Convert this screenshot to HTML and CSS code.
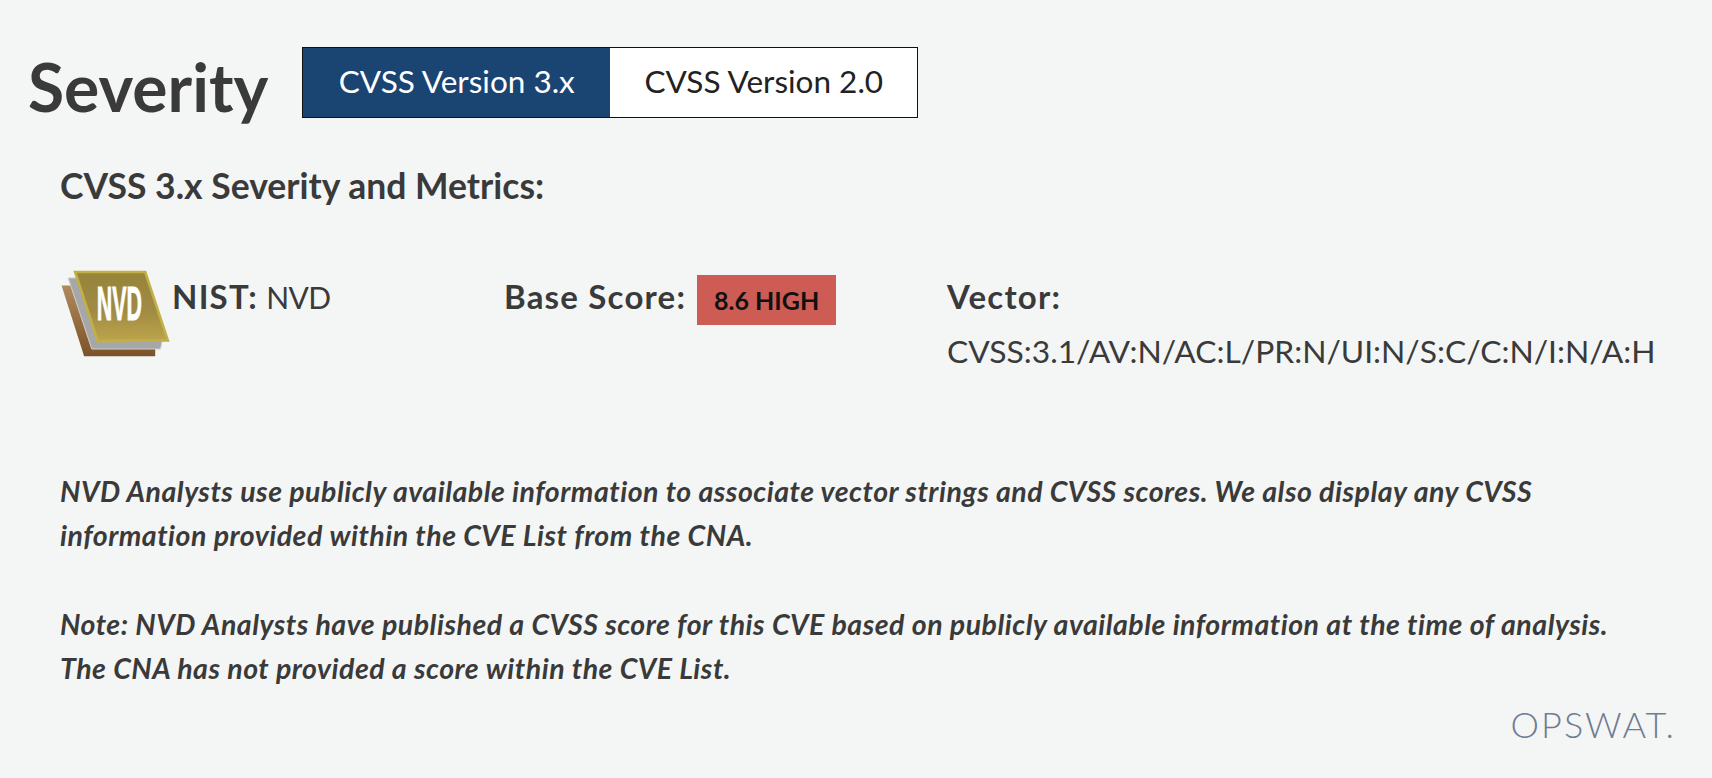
FILE: index.html
```html
<!DOCTYPE html>
<html lang="en">

<head>
    <meta charset="UTF-8">
    <meta name="viewport" content="width=device-width, initial-scale=1.0">
    <title>Severity</title>
    <link rel="stylesheet" href="styles.css">
</head>

<body>
    <div class="title-row">
        <h2 class="title">Severity</h2>
        <div class="tabs">
            <div class="tab tab-active">CVSS Version 3.x</div>
            <div class="tab">CVSS Version 2.0</div>
        </div>
    </div>

    <div class="content">
        <h3 class="metrics-title">CVSS 3.x Severity and Metrics:</h3>

        <div class="score-row">
            <div class="source">
                <svg class="nvd-icon" viewBox="60 58 330 265" width="110" height="88">
                    <defs>
                        <linearGradient id="goldFill" x1="0" y1="0" x2="0" y2="1">
                            <stop offset="0" stop-color="#96843a" />
                            <stop offset="0.55" stop-color="#a08a44" />
                            <stop offset="1" stop-color="#bca44a" />
                        </linearGradient>
                        <linearGradient id="brownFill" x1="0" y1="0" x2="0" y2="1">
                            <stop offset="0" stop-color="#b08a5c" />
                            <stop offset="1" stop-color="#7c5228" />
                        </linearGradient>
                    </defs>
                    <polygon points="64,105 280,105 346,290 346,318 132,318" fill="url(#brownFill)" />
                    <polygon points="84,82 300,82 366,276 362,296 155,296" fill="#a5a7a8" stroke="#d0d0cc" stroke-width="3" />
                    <polygon points="105,64 316,64 384,270 173,272" fill="url(#goldFill)" stroke="#c2b046" stroke-width="8" />
                    <text class="nvd-text" transform="translate(170 208) scale(3.22 7.1)">NVD</text>
                </svg>
                <p class="source-text"><strong class="label">NIST:</strong> <span class="source-name">NVD</span></p>
            </div>
            <div class="base-score">
                <strong class="label">Base Score:</strong>
                <span class="badge">8.6 HIGH</span>
            </div>
            <div class="vector">
                <strong class="label">Vector:</strong>
                <p class="vector-string">CVSS:3.1/AV:N/AC:L/PR:N/UI:N/S:C/C:N/I:N/A:H</p>
            </div>
        </div>

        <p class="note note-first">NVD Analysts use publicly available information to associate vector strings and CVSS scores. We also display any CVSS<br>information provided within the CVE List from the CNA.</p>
        <p class="note">Note: NVD Analysts have published a CVSS score for this CVE based on publicly available information at the time of analysis.<br>The CNA has not provided a score within the CVE List.</p>
    </div>

    <div class="brand-row">
        <span class="brand">OPSWAT.</span>
    </div>
</body>

</html>
```

FILE: styles.css
```css
html,
body {
    height: 100%;
}

body {
    margin: 0;
    overflow: hidden;
    box-sizing: border-box;
    padding: 47px 36px 0 28px;
    background-color: #f4f6f6;
    color: #3a3a3a;
    font-family: "Lato", "Noto Sans", sans-serif;
}

.title-row {
    display: flex;
    align-items: flex-start;
    gap: 34px;
}

.title {
    margin: 4px 0 0;
    font-size: 66px;
    line-height: 72px;
    font-weight: 700;
}

.tabs {
    display: flex;
    border: 1px solid #111;
}

.tab {
    width: 307px;
    height: 69px;
    line-height: 66px;
    text-align: center;
    background-color: #fff;
    color: #222;
    font-size: 31.5px;
}

.tab-active {
    background-color: #1a4472;
    color: #fff;
}

.content {
    padding-left: 32px;
}

.metrics-title {
    margin: 42px 0 0;
    font-size: 35.5px;
    line-height: 42px;
    font-weight: 700;
}

.score-row {
    display: flex;
    margin-top: 60px;
    font-size: 32px;
    line-height: 44px;
}

.label {
    font-size: 33px;
    letter-spacing: 1.2px;
}

.source {
    display: flex;
    width: 444px;
}

.nvd-icon {
    flex-shrink: 0;
    margin-top: 3px;
}

.nvd-text {
    fill: #fff;
    stroke: #fff;
    stroke-width: 0.4px;
    font-family: "Liberation Sans", sans-serif;
    font-size: 20px;
    font-weight: 700;
}

.source-text {
    margin: 7px 0 0 2px;
}

.source-name {
    font-size: 30px;
    letter-spacing: -0.6px;
}

.base-score {
    display: flex;
    align-items: flex-start;
    width: 443px;
    padding-top: 7px;
}

.badge {
    width: 139px;
    height: 50px;
    margin: 1px 0 0 11px;
    background-color: #cd5c55;
    color: #111;
    font-size: 25px;
    font-weight: 700;
    line-height: 50px;
    text-align: center;
}

.vector {
    padding-top: 7px;
}

.vector-string {
    margin: 10px 0 0;
    font-size: 31.8px;
}

.note {
    margin: 0;
    font-size: 28.5px;
    line-height: 44px;
    letter-spacing: 0.5px;
    font-style: italic;
    font-weight: 700;
}

.note-first {
    margin: 96px 0 45px;
}

.brand-row {
    display: flex;
    justify-content: flex-end;
    margin-top: 14px;
}

.brand {
    color: #6f7c92;
    font-size: 36px;
    line-height: 40px;
    font-weight: 300;
    letter-spacing: 2px;
}
```
